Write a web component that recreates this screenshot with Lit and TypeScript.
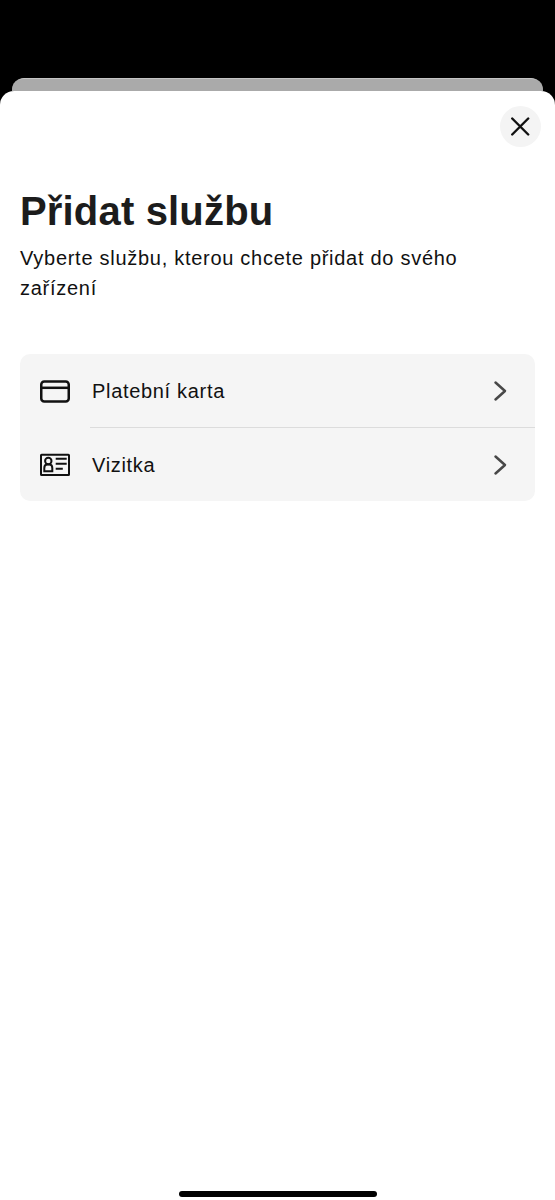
import { LitElement, html, css } from "lit";
import { customElement } from "lit/decorators.js";

const chevron = html`<svg class="chev" width="16" height="22" viewBox="0 0 16 22" fill="none" stroke="#484848" stroke-width="2.5" stroke-linecap="round" stroke-linejoin="round"><path d="M2.5 2.5 L12 11 L2.5 19.5"/></svg>`;

@customElement("app-root")
export class AppRoot extends LitElement {
  static styles = css`
    :host { display: block; width: 555px; height: 1200px; background: #000; font-family: "Liberation Sans", Arial, sans-serif; overflow: hidden; }
    .page { height: 1200px; display: flex; flex-direction: column; padding-top: 78px; box-sizing: border-box; }
    .back { height: 13px; margin: 0 12px; background: #aaa; border-top: 1px solid #c4c4c4; box-sizing: border-box; border-radius: 12px 12px 0 0; flex: none; }
    .sheet { flex: 1; background: #fff; border-radius: 14px 14px 0 0; display: flex; flex-direction: column; padding: 15px 20px 0; box-sizing: border-box; }
    .closebar { display: flex; justify-content: flex-end; margin-right: -6px; }
    .close { width: 41px; height: 41px; border-radius: 50%; background: #f4f4f4; display: flex; align-items: center; justify-content: center; }
    h1 { margin: 40px 0 0; font-size: 40px; line-height: 48px; font-weight: 700; color: #1c1c1c; letter-spacing: 0.17px; }
    p { margin: 8px 0 0; font-size: 20px; line-height: 30px; color: #111; letter-spacing: 0.72px; }
    .list { margin: 51px 0 0; background: #f5f5f5; border-radius: 10px; width: 515px; flex: none; }
    .row { height: 73px; display: flex; align-items: center; box-sizing: border-box; padding: 0 26px 0 20px; }
    .row.first { padding-top: 1px; }
    .icon { width: 31px; height: 25px; flex: none; display: block; }
    .label { margin-left: 21px; flex: 1; font-size: 20px; color: #111; letter-spacing: 0.68px; }
    .label.low { padding-top: 2px; }
    .divider { height: 1px; background: #dcdcdc; margin-left: 70px; }
    .home-wrap { margin-top: auto; display: flex; justify-content: center; padding-bottom: 3px; }
    .home { width: 198px; height: 6px; background: #000; border-radius: 3px; }
  `;

  render() {
    return html`<div class="page">
      <div class="back"></div>
      <div class="sheet">
        <div class="closebar"><div class="close">
          <svg width="20" height="20" viewBox="0 0 20 20" fill="none" stroke="#111" stroke-width="2.4" stroke-linecap="round"><path d="M1.2 1.5 L17.2 17.5 M17.2 1.5 L1.2 17.5"/></svg>
        </div></div>
        <h1>Přidat službu</h1>
        <p>Vyberte službu, kterou chcete přidat do svého zařízení</p>
        <div class="list">
          <div class="row first">
            <svg class="icon" viewBox="0 0 31 25" fill="none" stroke="#111" stroke-width="2.5"><rect x="1.25" y="2.45" width="27.5" height="20.1" rx="3"/><path d="M1 8.8 H29"/></svg>
            <span class="label">Platební karta</span>${chevron}
          </div>
          <div class="divider"></div>
          <div class="row">
            <svg class="icon" viewBox="0 0 31 25" fill="none" stroke="#111" stroke-width="2"><rect x="1" y="2.7" width="28" height="20.3" rx="0.6"/><circle cx="8.3" cy="9" r="3.2"/><path d="M4.3 19.2 V16 Q4.3 12.6 7.5 12.6 H9.1 Q12.3 12.6 12.3 16 V19.2 Z"/><path d="M15.7 6.7 H26.7 M15.7 11.7 H26.7 M15.7 16.7 H22.8"/></svg>
            <span class="label low">Vizitka</span>${chevron}
          </div>
        </div>
        <div class="home-wrap"><div class="home"></div></div>
      </div>
    </div>`;
  }
}
